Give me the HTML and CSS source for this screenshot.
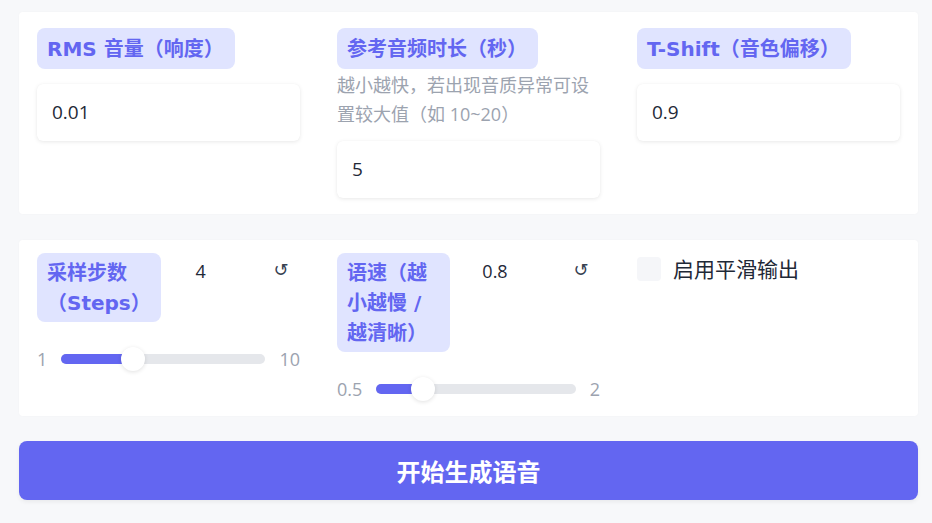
FILE: index.html
```html
<!DOCTYPE html>
<html lang="zh-CN">
<head>
<meta charset="utf-8">
<title>语音生成</title>
<link rel="stylesheet" href="styles.css">
</head>
<body>
<div class="page">
  <section class="panel panel-top">
    <div class="field">
      <span class="label">RMS 音量（响度）</span>
      <div class="input">0.01</div>
    </div>
    <div class="field">
      <span class="label">参考音频时长（秒）</span>
      <p class="info">越小越快，若出现音质异常可设置较大值（如 10~20）</p>
      <div class="input input-info">5</div>
    </div>
    <div class="field">
      <span class="label">T-Shift（音色偏移）</span>
      <div class="input">0.9</div>
    </div>
  </section>

  <section class="panel panel-bottom">
    <div class="slider">
      <div class="slider-head">
        <span class="label label-wrap label-steps">采样步数（Steps）</span>
        <span class="num">4</span>
        <span class="reset">↺</span>
      </div>
      <div class="slider-row">
        <span class="bound">1</span>
        <div class="track" style="--p:0.3333">
          <div class="fill"></div>
          <div class="thumb"></div>
        </div>
        <span class="bound">10</span>
      </div>
    </div>

    <div class="slider">
      <div class="slider-head">
        <span class="label label-wrap label-speed">语速（越小越慢 / 越清晰）</span>
        <span class="num">0.8</span>
        <span class="reset">↺</span>
      </div>
      <div class="slider-row">
        <span class="bound">0.5</span>
        <div class="track" style="--p:0.2">
          <div class="fill"></div>
          <div class="thumb"></div>
        </div>
        <span class="bound">2</span>
      </div>
    </div>

    <label class="check">
      <span class="box"></span>
      <span class="check-text">启用平滑输出</span>
    </label>
  </section>

  <button class="generate">开始生成语音</button>
</div>
</body>
</html>
```

FILE: styles.css
```css
* { box-sizing: border-box; }

html, body {
  margin: 0;
  padding: 0;
  background: #f7f8fa;
}

body {
  font-family: "Open Sans", "Noto Sans CJK SC", sans-serif;
  color: #1f2937;
}

.page {
  display: flex;
  flex-direction: column;
  padding: 12px 14px 22px 19px;
}

.panel {
  background: #ffffff;
  border-radius: 4px;
  box-shadow: 0 0 3px rgba(0, 0, 0, 0.025);
  display: grid;
  grid-template-columns: repeat(3, 1fr);
  column-gap: 37px;
  padding: 16px 18px 16px 18px;
}

.panel-bottom {
  margin-top: 26px;
  padding: 13px 18px 15px 18px;
}

.field {
  display: flex;
  flex-direction: column;
  align-items: flex-start;
}

.label {
  display: inline-block;
  background: #e0e4ff;
  color: #6366f1;
  font-family: "DejaVu Sans", "Noto Sans CJK SC", sans-serif;
  font-weight: 700;
  font-size: 20px;
  line-height: 30px;
  padding: 6px 11px 5px 10px;
  border-radius: 8px;
}

.info {
  margin: 2px 0 0 0;
  font-size: 18px;
  line-height: 29px;
  color: #9ca3af;
}

.input {
  align-self: stretch;
  margin-top: 15px;
  height: 57px;
  background: #ffffff;
  border-radius: 6px;
  box-shadow: 0 1px 4px rgba(0, 0, 0, 0.09), 0 0 1px rgba(0, 0, 0, 0.04);
  padding: 0 15px;
  font-size: 19px;
  line-height: 57px;
  color: #1f2937;
}

.input-info {
  margin-top: 12px;
}

.slider {
  display: flex;
  flex-direction: column;
}

.slider-head {
  display: flex;
  align-items: flex-start;
}

.label-wrap {
  padding: 5px 10px 4px 10px;
}

.label-steps { flex: 0 0 123px; }
.label-speed { flex: 0 0 113px; }

.num {
  width: 80px;
  text-align: center;
  font-size: 18px;
  line-height: 36px;
  color: #1f2937;
}

.label-speed + .num {
  margin-left: 5px;
}

.reset {
  margin-left: auto;
  width: 38px;
  text-align: center;
  font-family: "DejaVu Sans", sans-serif;
  font-size: 18px;
  line-height: 34px;
  color: #374151;
}

.slider-row {
  display: flex;
  align-items: center;
  gap: 14px;
  margin-top: 25px;
  height: 24px;
}

.bound {
  font-size: 18px;
  color: #9ca3af;
  line-height: 24px;
}

.track {
  position: relative;
  flex: 1;
  height: 10px;
  border-radius: 5px;
  background: #e5e7eb;
}

.fill {
  height: 100%;
  width: calc(12px + (100% - 24px) * var(--p));
  border-radius: 5px;
  background: #6366f1;
}

.thumb {
  position: absolute;
  top: 50%;
  left: calc(12px + (100% - 24px) * var(--p));
  width: 24px;
  height: 24px;
  margin: -12px 0 0 -12px;
  border-radius: 50%;
  background: #ffffff;
  box-shadow: 0 1px 4px rgba(0, 0, 0, 0.12);
}

.check {
  display: flex;
  align-items: center;
  gap: 12px;
  height: 30px;
  margin-top: 1px;
}

.box {
  width: 24px;
  height: 24px;
  border-radius: 4px;
  background: #f5f6f9;
}

.check-text {
  font-size: 21px;
  line-height: 30px;
  color: #1f2937;
}

.generate {
  margin-top: 25px;
  height: 59px;
  border: none;
  border-radius: 8px;
  background: #6366f1;
  color: #ffffff;
  font-family: "Open Sans", "Noto Sans CJK SC", sans-serif;
  font-weight: 700;
  font-size: 24px;
  box-shadow: 0 2px 4px rgba(0, 0, 0, 0.06);
  cursor: pointer;
}
```
